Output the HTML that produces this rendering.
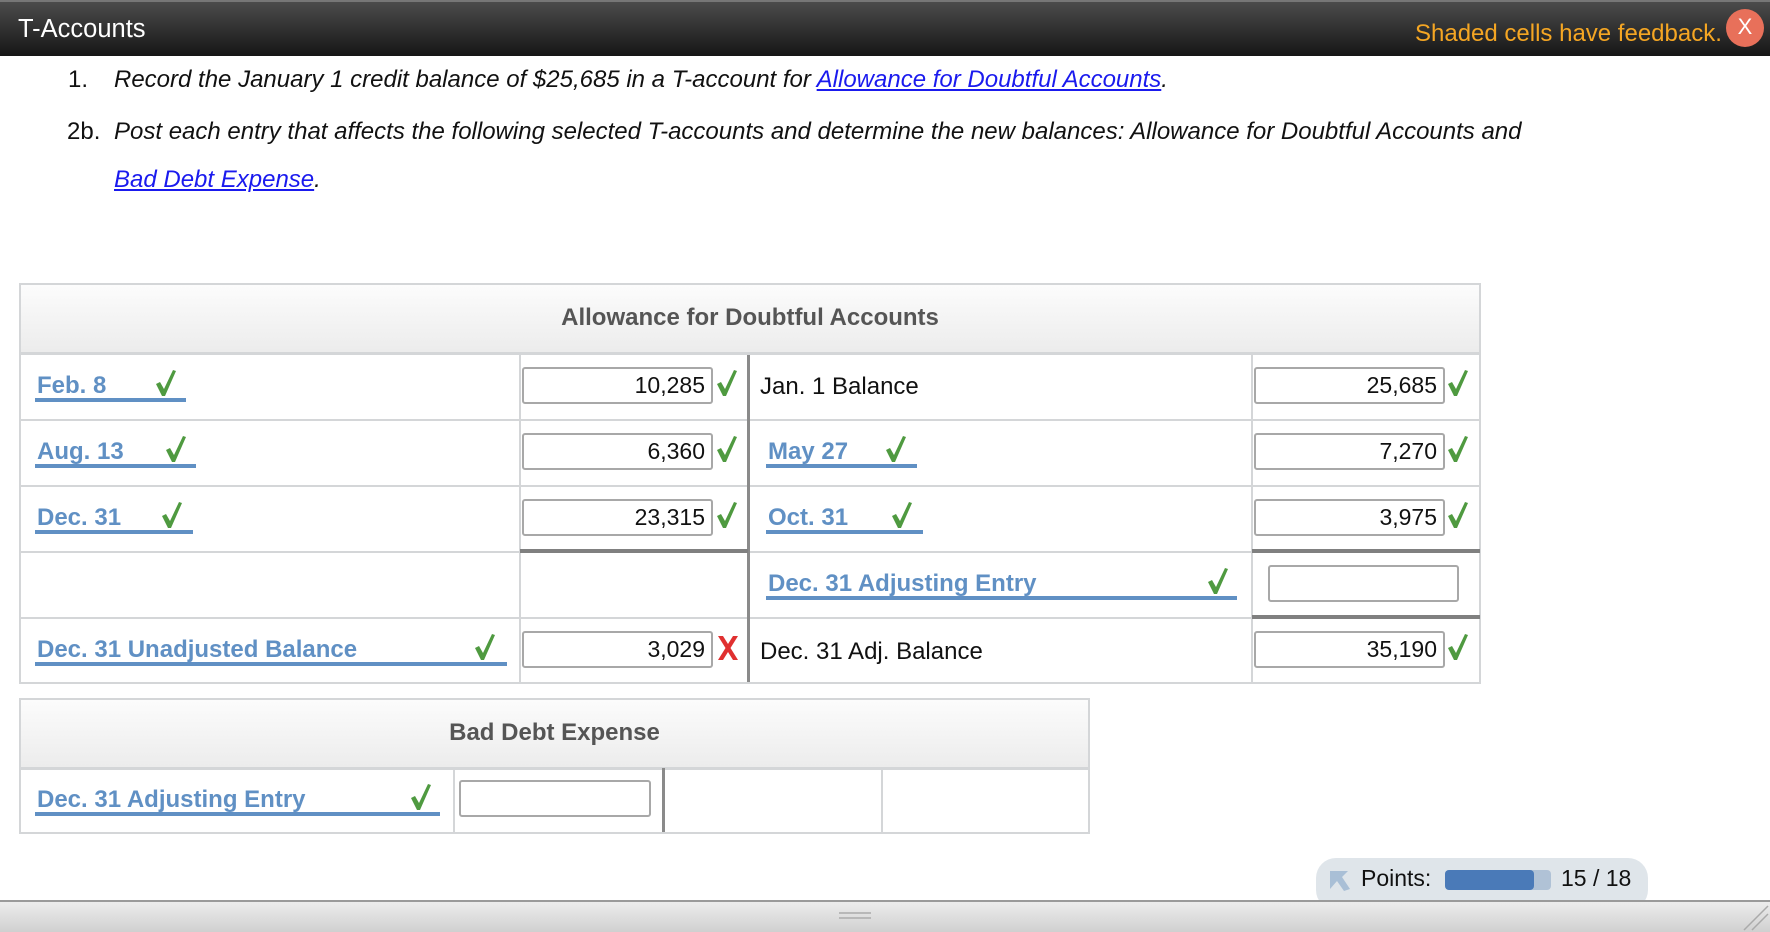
<!DOCTYPE html>
<html><head><meta charset="utf-8"><style>
*{margin:0;padding:0;box-sizing:border-box}
body{width:1770px;height:932px;overflow:hidden;background:#fff;font-family:"Liberation Sans",Arial,sans-serif;position:relative}
.a{position:absolute}
.hdr{left:0;top:0;width:1770px;height:56px;background:linear-gradient(#4c4c4c,#161616);border-top:2px solid #777}
.it{font-style:italic;font-size:24px;color:#111;white-space:nowrap}
.lnk{color:#1a1aee;text-decoration:underline}
.tb{border:2px solid #d4d6d8;background:#fff}
.th{background:linear-gradient(#fcfcfc,#ececec);border-bottom:3px solid #d4d6d8;font-weight:bold;color:#555;font-size:24px;text-align:center}
.hl{height:2px;background:#d4d6d8}
.vl{width:2px;background:#d4d6d8}
.inp{border:2px solid #a8a8a8;border-radius:3px;background:#fff;height:37px;font-size:23px;text-align:right;padding-right:6px;line-height:33px;color:#111}
.lbl{color:#6090c4;font-weight:bold;font-size:24px;border-bottom:4px solid #6090c4;height:32px;line-height:31px;white-space:nowrap;padding-left:2px;overflow:hidden}
.txt{font-size:24px;color:#111}
</style></head><body>
<div class="a hdr"></div>
<div class="a" style="left:18px;top:15px;color:#fff;font-size:25.5px">T-Accounts</div>
<div class="a" style="left:1415px;top:20px;color:#f5a623;font-size:24px;white-space:nowrap">Shaded cells have feedback.</div>
<div class="a" style="left:1726px;top:9px;width:38px;height:38px;border-radius:50%;background:#e8705a;color:#fff;font-size:22px;text-align:center;line-height:36px">X</div>

<div class="a it" style="left:68px;top:66px;font-style:normal">1.</div>
<div class="a it" style="left:114px;top:66px">Record the January 1 credit balance of $25,685 in a T-account for <span class="lnk">Allowance for Doubtful Accounts</span>.</div>
<div class="a it" style="left:67px;top:118px;font-style:normal">2b.</div>
<div class="a it" style="left:114px;top:118px">Post each entry that affects the following selected T-accounts and determine the new balances: Allowance for Doubtful Accounts and</div>
<div class="a it" style="left:114px;top:166px"><span class="lnk">Bad Debt Expense</span>.</div>

<!-- table 1 -->
<div class="a tb" style="left:19px;top:283px;width:1462px;height:401px"></div>
<div class="a th" style="left:21px;top:285px;width:1458px;height:70px;line-height:66px">Allowance for Doubtful Accounts</div>
<div class="a hl" style="left:21px;top:419px;width:1458px"></div>
<div class="a hl" style="left:21px;top:485px;width:1458px"></div>
<div class="a hl" style="left:21px;top:551px;width:1458px"></div>
<div class="a hl" style="left:21px;top:617px;width:1458px"></div>
<div class="a vl" style="left:519px;top:355px;height:327px"></div>
<div class="a vl" style="left:1251px;top:355px;height:327px"></div>
<div class="a" style="left:747px;top:355px;width:3px;height:327px;background:#8a8a8a"></div>
<div class="a" style="left:520px;top:549px;width:228px;height:4px;background:#808080"></div>
<div class="a" style="left:1252px;top:549px;width:228px;height:4px;background:#808080"></div>
<div class="a" style="left:1252px;top:615px;width:228px;height:4px;background:#808080"></div>

<div class="a lbl" style="left:35px;top:370px;width:151px">Feb. 8</div>
<div class="a lbl" style="left:35px;top:436px;width:161px">Aug. 13</div>
<div class="a lbl" style="left:35px;top:502px;width:158px">Dec. 31</div>
<div class="a lbl" style="left:35px;top:634px;width:472px">Dec. 31 Unadjusted Balance</div>
<div class="a lbl" style="left:766px;top:436px;width:151px">May 27</div>
<div class="a lbl" style="left:766px;top:502px;width:157px">Oct. 31</div>
<div class="a lbl" style="left:766px;top:568px;width:471px">Dec. 31 Adjusting Entry</div>
<div class="a txt" style="left:760px;top:373px">Jan. 1 Balance</div>
<div class="a txt" style="left:760px;top:638px">Dec. 31 Adj. Balance</div>

<div class="a inp" style="left:522px;top:367px;width:191px">10,285</div>
<div class="a inp" style="left:522px;top:433px;width:191px">6,360</div>
<div class="a inp" style="left:522px;top:499px;width:191px">23,315</div>
<div class="a inp" style="left:522px;top:631px;width:191px">3,029</div>
<div class="a inp" style="left:1254px;top:367px;width:191px">25,685</div>
<div class="a inp" style="left:1254px;top:433px;width:191px">7,270</div>
<div class="a inp" style="left:1254px;top:499px;width:191px">3,975</div>
<div class="a inp" style="left:1268px;top:565px;width:191px"></div>
<div class="a inp" style="left:1254px;top:631px;width:191px">35,190</div>

<!-- table 2 -->
<div class="a tb" style="left:19px;top:698px;width:1071px;height:136px"></div>
<div class="a th" style="left:21px;top:700px;width:1067px;height:70px;line-height:66px">Bad Debt Expense</div>
<div class="a vl" style="left:453px;top:770px;height:62px"></div>
<div class="a" style="left:662px;top:768px;width:3px;height:64px;background:#8a8a8a"></div>
<div class="a vl" style="left:881px;top:770px;height:62px"></div>
<div class="a lbl" style="left:35px;top:784px;width:405px">Dec. 31 Adjusting Entry</div>
<div class="a inp" style="left:459px;top:780px;width:192px"></div>

<!-- checks -->
<svg class="a" style="left:0;top:0" width="1770" height="932">
<defs><path id="ck" d="M1 14 L5 12 L9 19 L18 0 L21 1 L10 26 L7 26 Z" fill="#4f9a40"/></defs>
<use href="#ck" x="155" y="370"/>
<use href="#ck" x="165" y="436"/>
<use href="#ck" x="161" y="502"/>
<use href="#ck" x="474" y="634"/>
<use href="#ck" x="716" y="370"/>
<use href="#ck" x="716" y="436"/>
<use href="#ck" x="716" y="502"/>
<use href="#ck" x="885" y="436"/>
<use href="#ck" x="891" y="502"/>
<use href="#ck" x="1207" y="568"/>
<use href="#ck" x="1447" y="370"/>
<use href="#ck" x="1447" y="436"/>
<use href="#ck" x="1447" y="502"/>
<use href="#ck" x="1447" y="634"/>
<use href="#ck" x="410" y="784"/>
<path d="M718 636 L723 636 L728 644 L733 636 L738 636 L730.5 648 L738 660 L733 660 L728 652 L723 660 L718 660 L725.5 648 Z" fill="#e03030"/>
</svg>

<!-- points -->
<div class="a" style="left:1316px;top:858px;width:332px;height:52px;border-radius:20px;background:#dfe5ea"></div>
<svg class="a" style="left:1328px;top:869px" width="24" height="24"><path d="M2 2 L20 2 L14 8 L22 20 L16 22 L9 12 L2 20 Z" fill="#a9bfd6"/></svg>
<div class="a" style="left:1361px;top:865px;font-size:23px;color:#111">Points:</div>
<div class="a" style="left:1445px;top:870px;width:106px;height:20px;border-radius:4px;background:#b0c2d6"></div>
<div class="a" style="left:1445px;top:870px;width:89px;height:20px;border-radius:4px;background:#4a7ab8"></div>
<div class="a" style="left:1561px;top:865px;font-size:23px;color:#111">15 / 18</div>

<!-- footer -->
<div class="a" style="left:0;top:900px;width:1770px;height:32px;background:linear-gradient(#ececec,#d0d0d0);border-top:2px solid #9a9a9a"></div>
<div class="a" style="left:839px;top:912px;width:32px;height:2px;background:#b8b8b8"></div>
<div class="a" style="left:839px;top:917px;width:32px;height:2px;background:#b8b8b8"></div>
<svg class="a" style="left:1740px;top:902px" width="30" height="30"><path d="M28 4 L4 28 M28 12 L12 28" stroke="#aaa" stroke-width="1.5"/></svg>
</body></html>
